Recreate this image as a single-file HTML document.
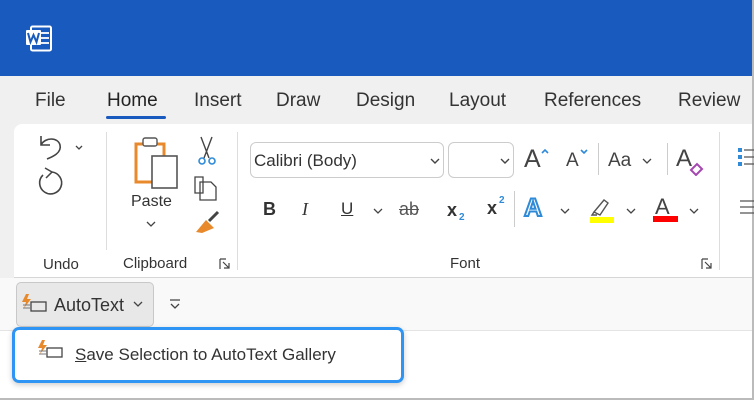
<!DOCTYPE html>
<html><head><style>
*{margin:0;padding:0;box-sizing:border-box}
body{width:754px;height:400px;position:relative;overflow:hidden;background:#f0f0f0;font-family:"Liberation Sans",sans-serif;color:#242424}
.a{position:absolute;white-space:nowrap}
.tab{position:absolute;top:90px;font-size:19px;color:#333}
.lbl{font-size:15px;color:#333}
</style></head><body>
<div class="a" style="left:0;top:0;width:754px;height:76px;background:#185abd"></div>
<svg class="a" style="left:25px;top:25px" width="28" height="28" viewBox="0 0 28 28">
<rect x="6" y="1.5" width="20" height="24" rx="1.5" fill="#185abd" stroke="#fff" stroke-width="2"/>
<line x1="15" y1="8" x2="24" y2="8" stroke="#fff" stroke-width="1.8"/><line x1="15" y1="13" x2="24" y2="13" stroke="#fff" stroke-width="1.8"/><line x1="15" y1="18" x2="24" y2="18" stroke="#fff" stroke-width="1.8"/>
<rect x="1" y="5" width="15" height="15" rx="1" fill="#fff"/>
<path d="M3 8 L5.5 17 L8.5 10 L11.5 17 L14 8" fill="none" stroke="#185abd" stroke-width="2"/>
</svg>
<div class="tab" style="left:35px">File</div>
<div class="tab" style="left:107px;color:#222">Home</div>
<div class="a" style="left:106px;top:116px;width:60px;height:3px;background:#185abd;border-radius:2px"></div>
<div class="tab" style="left:194px">Insert</div>
<div class="tab" style="left:276px">Draw</div>
<div class="tab" style="left:356px">Design</div>
<div class="tab" style="left:449px">Layout</div>
<div class="tab" style="left:544px">References</div>
<div class="tab" style="left:678px">Review</div>

<div class="a" style="left:14px;top:124px;width:740px;height:154px;background:#fff;border-radius:8px 0 0 0;border-bottom:1px solid #d6d6d6"></div>
<div class="a" style="left:752px;top:0;width:2px;height:400px;background:#bbb"></div>
<!-- undo -->
<svg class="a" style="left:36px;top:133px" width="60" height="72" viewBox="0 0 60 72">
<path d="M5 3 L5 12 L14 12 M5 12 C9 4 22 4 24 12 C26 20 16 24 11 26" fill="none" stroke="#444" stroke-width="1.6"/>
<path d="M40 13 l3 3 l3 -3" fill="none" stroke="#444" stroke-width="1.3"/>
<path d="M7 42 A11 11 0 1 0 16 39" fill="none" stroke="#444" stroke-width="1.6"/>
<path d="M9 35 L16 39 L10 45" fill="none" stroke="#444" stroke-width="1.5"/>
</svg>
<div class="a lbl" style="left:43px;top:256px">Undo</div>
<div class="a" style="left:106px;top:132px;width:1px;height:118px;background:#ddd"></div>
<!-- clipboard -->
<svg class="a" style="left:132px;top:135px" width="100" height="110" viewBox="0 0 100 110">
<rect x="4" y="9" width="28" height="38" fill="none" stroke="#e8892b" stroke-width="3"/>
<rect x="11" y="3" width="14" height="8" rx="2" fill="#fff" stroke="#555" stroke-width="1.4"/>
<rect x="20" y="21" width="25" height="32" fill="#fff" stroke="#555" stroke-width="1.6"/>
<path d="M69 2 L77 23 M80 2 L72 23" stroke="#444" stroke-width="1.4"/>
<circle cx="70" cy="26" r="3" fill="none" stroke="#2f8ad8" stroke-width="1.6"/><circle cx="80" cy="26" r="3" fill="none" stroke="#2f8ad8" stroke-width="1.6"/>
<path d="M63 42 h8 v16 h-8z M68 47 h11 l5 5 v13 h-16z" fill="#fff" stroke="#444" stroke-width="1.3"/>
<path d="M64 97 l10 -12 l8 8 l-12 5z" fill="#e8892b"/>
<path d="M77 86 l9 -9" stroke="#444" stroke-width="3"/>
</svg>
<div class="a lbl" style="left:131px;top:193px;font-size:16px">Paste</div>
<svg class="a" style="left:146px;top:220px" width="10" height="8"><path d="M1 2 l4 4 l4 -4" fill="none" stroke="#444" stroke-width="1.3"/></svg>
<div class="a lbl" style="left:123px;top:255px">Clipboard</div>
<svg class="a" style="left:219px;top:258px" width="12" height="12"><path d="M1 1 h6 M1 1 v10 M4 4 l6 6 M10 5 v5 h-5" fill="none" stroke="#444" stroke-width="1.2"/></svg>
<div class="a" style="left:237px;top:132px;width:1px;height:138px;background:#ddd"></div>
<!-- font -->
<div class="a" style="left:250px;top:142px;width:194px;height:36px;border:1px solid #ccc;border-radius:6px"></div>
<div class="a" style="left:254px;top:151px;font-size:17px;color:#333">Calibri (Body)</div>
<svg class="a" style="left:430px;top:157px" width="10" height="8"><path d="M1 2 l4 4 l4 -4" fill="none" stroke="#444" stroke-width="1.4"/></svg>
<div class="a" style="left:448px;top:142px;width:66px;height:36px;border:1px solid #ccc;border-radius:6px"></div>
<svg class="a" style="left:500px;top:157px" width="10" height="8"><path d="M1 2 l4 4 l4 -4" fill="none" stroke="#444" stroke-width="1.4"/></svg>
<div class="a" style="left:524px;top:145px;font-size:25px;color:#444">A</div>
<svg class="a" style="left:541px;top:148px" width="10" height="8"><path d="M1 5 l3 -3 l3 3" fill="none" stroke="#2f8ad8" stroke-width="1.6"/></svg>
<div class="a" style="left:566px;top:150px;font-size:19px;color:#444">A</div>
<svg class="a" style="left:580px;top:148px" width="10" height="8"><path d="M1 2 l3 3 l3 -3" fill="none" stroke="#2f8ad8" stroke-width="1.6"/></svg>
<div class="a" style="left:598px;top:143px;width:1px;height:32px;background:#ccc"></div>
<div class="a" style="left:608px;top:150px;font-size:19px;color:#444">Aa</div>
<svg class="a" style="left:642px;top:157px" width="10" height="8"><path d="M1 2 l4 4 l4 -4" fill="none" stroke="#444" stroke-width="1.3"/></svg>
<div class="a" style="left:667px;top:143px;width:1px;height:32px;background:#ccc"></div>
<div class="a" style="left:676px;top:145px;font-size:24px;color:#444">A</div>
<svg class="a" style="left:688px;top:160px" width="16" height="16"><path d="M3 10 l6 -6 l5 5 l-6 6z" fill="#fff" stroke="#a547b0" stroke-width="2"/></svg>
<div class="a" style="left:263px;top:199px;font-size:18px;font-weight:bold;color:#333">B</div>
<div class="a" style="left:302px;top:199px;font-size:18px;font-style:italic;font-family:'Liberation Serif',serif;color:#333">I</div>
<div class="a" style="left:341px;top:199px;font-size:17px;color:#333;text-decoration:underline">U</div>
<svg class="a" style="left:373px;top:207px" width="10" height="8"><path d="M1 2 l4 4 l4 -4" fill="none" stroke="#444" stroke-width="1.3"/></svg>
<div class="a" style="left:399px;top:199px;font-size:18px;color:#555;text-decoration:line-through">ab</div>
<div class="a" style="left:447px;top:200px;font-size:18px;font-weight:bold;color:#333">x</div>
<div class="a" style="left:459px;top:212px;font-size:10px;font-weight:bold;color:#2f8ad8">2</div>
<div class="a" style="left:487px;top:198px;font-size:18px;font-weight:bold;color:#333">x</div>
<div class="a" style="left:499px;top:195px;font-size:10px;font-weight:bold;color:#2f8ad8">2</div>
<div class="a" style="left:514px;top:191px;width:1px;height:36px;background:#ccc"></div>
<div class="a" style="left:524px;top:194px;font-size:25px;font-weight:bold;color:#fff;-webkit-text-stroke:2px #2f8ad8">A</div>
<svg class="a" style="left:560px;top:207px" width="10" height="8"><path d="M1 2 l4 4 l4 -4" fill="none" stroke="#444" stroke-width="1.3"/></svg>
<svg class="a" style="left:588px;top:192px" width="30" height="32"><path d="M6 20 l10 -12 l4 3 l-8 12z M6 20 l-2 3 l5 0" fill="none" stroke="#555" stroke-width="1.4"/><rect x="2" y="25" width="24" height="6" fill="#ffff00"/></svg>
<svg class="a" style="left:626px;top:207px" width="10" height="8"><path d="M1 2 l4 4 l4 -4" fill="none" stroke="#444" stroke-width="1.3"/></svg>
<div class="a" style="left:655px;top:194px;font-size:22px;color:#444">A</div>
<div class="a" style="left:653px;top:216px;width:25px;height:6px;background:#f00"></div>
<svg class="a" style="left:689px;top:207px" width="10" height="8"><path d="M1 2 l4 4 l4 -4" fill="none" stroke="#444" stroke-width="1.3"/></svg>
<div class="a lbl" style="left:450px;top:255px">Font</div>
<svg class="a" style="left:701px;top:258px" width="12" height="12"><path d="M1 1 h6 M1 1 v10 M4 4 l6 6 M10 5 v5 h-5" fill="none" stroke="#444" stroke-width="1.2"/></svg>
<div class="a" style="left:719px;top:132px;width:1px;height:138px;background:#ddd"></div>
<svg class="a" style="left:738px;top:148px" width="16" height="70"><rect x="0" y="0" width="4" height="4" fill="#2f8ad8"/><rect x="0" y="7" width="4" height="4" fill="#2f8ad8"/><rect x="0" y="14" width="4" height="4" fill="#2f8ad8"/><path d="M6 2h10M6 9h10M6 16h10 M2 53h14M2 59h14M2 65h14" stroke="#555" stroke-width="1.3"/></svg>

<!-- autotext row -->
<div class="a" style="left:0;top:278px;width:752px;height:53px;background:#f9f9f9;border-bottom:1px solid #e4e4e4"></div>
<div class="a" style="left:0;top:331px;width:752px;height:67px;background:#fff"></div>
<div class="a" style="left:0;top:398px;width:754px;height:2px;background:#bbb"></div>
<div class="a" style="left:16px;top:282px;width:138px;height:45px;background:#e8e8e8;border:1px solid #c8c8c8;border-radius:5px"></div>
<svg class="a" style="left:20px;top:294px" width="28" height="20"><path d="M6 0 l-4 8 h4 l-2 6 l7 -9 h-4 l2 -5z" fill="#e8892b"/><rect x="11" y="8" width="15" height="9" fill="none" stroke="#444" stroke-width="1.3"/><path d="M3 11h8M3 14h8" stroke="#777"/></svg>
<div class="a" style="left:54px;top:295px;font-size:18px;color:#333">AutoText</div>
<svg class="a" style="left:133px;top:300px" width="10" height="8"><path d="M1 2 l4 4 l4 -4" fill="none" stroke="#444" stroke-width="1.3"/></svg>
<svg class="a" style="left:169px;top:298px" width="12" height="12"><path d="M1 2h10 M2 6 l4 4 l4 -4" fill="none" stroke="#444" stroke-width="1.3"/></svg>
<div class="a" style="left:12px;top:327px;width:392px;height:56px;border:3px solid #2f95f5;border-radius:7px;background:#fff;box-shadow:0 2px 6px rgba(0,0,0,.2)"></div>
<svg class="a" style="left:36px;top:340px" width="28" height="20"><path d="M6 0 l-4 8 h4 l-2 6 l7 -9 h-4 l2 -5z" fill="#e8892b"/><rect x="11" y="8" width="15" height="9" fill="none" stroke="#444" stroke-width="1.3"/><path d="M3 11h8M3 14h8" stroke="#777"/></svg>
<div class="a" style="left:75px;top:345px;font-size:17px;color:#333"><u>S</u>ave Selection to AutoText Gallery</div>
</body></html>
